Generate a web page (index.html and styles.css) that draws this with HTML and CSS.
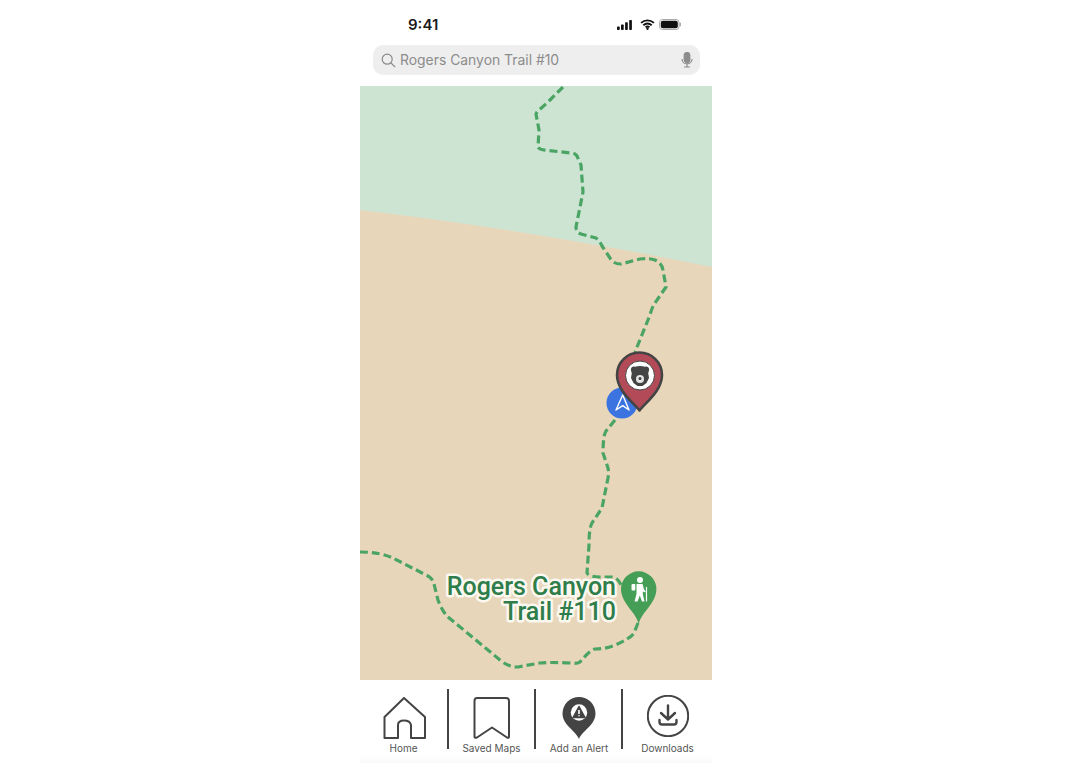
FILE: index.html
```html
<!DOCTYPE html>
<html lang="en">
<head>
  <meta charset="UTF-8">
  <title>Trail Map</title>
  <meta name="viewport" content="width=device-width, initial-scale=1.0">
  <link rel="stylesheet" href="styles.css">
</head>
<body>

<div class="phone">
  <div class="status-bar">
    <span class="time">9:41</span>
    <div class="status-icons">
      <svg width="15" height="10" viewBox="0 0 15 10"><rect x="0" y="6.500" width="2.700" height="3.500" rx="0.700"/><rect x="4" y="4.500" width="2.700" height="5.500" rx="0.700"/><rect x="8.100" y="2.200" width="2.700" height="7.800" rx="0.700"/><rect x="12.200" y="0" width="2.700" height="10" rx="0.700"/></svg>
      <svg class="wifi-icon" width="15" height="11" viewBox="0 0 16 12"><path class="wifi" d="M1 4.200C5 .6 11 .6 15 4.200M3.400 6.800c2.700-2.300 6.500-2.300 9.200 0M5.900 9c1.300-1 2.900-1 4.200 0"/><circle cx="8" cy="10.600" r="1.300"/></svg>
      <svg width="22" height="11" viewBox="0 0 22 11"><rect class="batt-edge" x="0.500" y="0.500" width="19.500" height="10" rx="3"/><rect x="1.800" y="1.800" width="17" height="7.400" rx="2"/><rect class="batt-edge-fill" x="20.600" y="3.600" width="1.200" height="3.800" rx="0.600"/></svg>
    </div>
  </div>

  <div class="search">
    <svg class="search-icon" width="15" height="15" viewBox="0 0 15 15"><circle cx="6.200" cy="6.200" r="5"/><path d="M10 10l4.200 4.200"/></svg>
    <span class="search-text">Rogers Canyon Trail #10</span>
    <svg class="mic" width="12" height="16" viewBox="0 0 12 16"><rect class="mic-head" x="3.200" y="0.500" width="5.600" height="10" rx="2.800"/><path d="M1 7c0 6.400 10 6.400 10 0M6 12v2.500M3 15h6"/></svg>
  </div>

  <svg class="map" width="352" height="594" viewBox="360 86 352 594">
    <rect class="land" x="360" y="86" width="352" height="594"/>
    <path class="forest" d="M360 86H712V267Q530 230 360 210Z"/>

    <path class="trail" d="M563 87L549 101L537 112L536 114L539 130L538 147Q539 149 544 150L571 153Q575 153 577 156L581 165L583 192L579 212L576 227Q576 232 581 234L596 238Q599 240 602 246L610 258Q613 264 621 264L640 259Q650 258 655 260Q662 263 663 270L666 287L655 303Q652 307 650 315L635 352"/>
    <path class="trail" d="M615 420L606 431Q603 436 603 453L608 468Q609 472 608 478L602 508L592 523Q589 528 589 545L587 573Q590 577 600 577L612 577Q618 577 622 587"/>
    <path class="trail" d="M638 623L634 633Q630 639 613 646Q605 649 595 649Q590 650 580 662Q577 664 570 663Q550 662 540 663L518 667Q508 667 500 660L448 617Q442 611 438 600L434 584Q433 578 426 575L393 558Q380 552 360 552"/>

    <text class="trail-label" x="616" y="595">Rogers Canyon</text>
    <text class="trail-label" x="616" y="620">Trail #110</text>

    <!-- green hiker pin -->
    <path class="pin-green" d="M638.700 625C637.500 613 621 604 621 589A17.700 17.700 0 0 1 656.400 589C656.400 604 640 613 638.700 625Z"/>
    <circle class="hiker" cx="640" cy="580" r="3"/>
    <path class="hiker" d="M636.500 584H642.500L644 589.500L645.500 591V592.500L642.800 591.500V594L644.500 601.500H642L639.800 595.500L637.500 601.500H634.500L636.500 594Z"/>
    <rect class="hiker" x="631.500" y="584" width="3.800" height="6.500" rx="1"/>
    <path class="hiker-pole" d="M646.500 587V601.500"/>

    <!-- position marker -->
    <circle class="you" cx="622" cy="403" r="15.500"/>
    <path class="you-arrow" d="M622.700 395L629 410L622.700 405.700L616 410Z"/>

    <!-- bear alert pin -->
    <path class="pin-red" d="M639.500 410.500C634 403 617 391 617 375A22.500 22.500 0 0 1 662 375C662 391 645 403 639.500 410.500Z"/>
    <circle class="bear-ring" cx="640" cy="375.500" r="14.500"/>
    <path class="bear" d="M631 370.500A3 3 0 0 1 635 366.800Q640 365.200 645 366.800A3 3 0 0 1 649 370.500Q648.500 372 648.200 373L649 378L646.500 383L642.500 386H637.500L633.500 383L631 378L631.800 373Q631.300 372 631 370.500Z"/>
    <circle class="bear-snout" cx="640" cy="379" r="4"/>
    <circle class="bear" cx="640" cy="378.500" r="1.500"/>
  </svg>

  <nav class="tabbar">
    <a class="tab tab-home">
      <svg class="tab-icon" width="44" height="42" viewBox="0 0 44 42"><path d="M22 1L2.500 20V41H16V28Q16 23.500 22 23.500T29 28V41H43V20L22 1Z"/></svg>
      <span>Home</span>
    </a>
    <div class="divider"></div>
    <a class="tab">
      <svg class="tab-icon" width="38" height="42" viewBox="0 0 38 42"><path d="M4 1H33Q36 1 36 4V39.500Q36 41.500 34 40.500L19 30.500L4 40.500Q1.500 41.500 1.500 39.500V4Q1.500 1 4 1Z"/></svg>
      <span>Saved Maps</span>
    </a>
    <div class="divider"></div>
    <a class="tab tab-alert">
      <svg class="tab-icon" width="34" height="42" viewBox="0 0 34 42"><path class="alert-pin" d="M17 42C13 33 .5 28 .5 16.500A16.500 16.500 0 0 1 33.500 16.500C33.500 28 21 33 17 42Z"/><circle class="alert-hole" cx="17" cy="15.500" r="8.200"/><path class="alert-tri" d="M17 9.500L23 20.500H11Z"/><path class="alert-mark" d="M17 13V17M17 18.300V19.300"/></svg>
      <span>Add an Alert</span>
    </a>
    <div class="divider"></div>
    <a class="tab tab-downloads">
      <svg class="tab-icon" width="42" height="42" viewBox="0 0 42 42"><circle cx="21" cy="21" r="20.200"/><path class="dl" d="M21 10.500V24.500M14 18L21 24.500L28 18M12.500 25V27Q12.500 29.500 15 29.500H27Q29.500 29.500 29.500 27V25"/></svg>
      <span>Downloads</span>
    </a>
  </nav>
</div>

</body>
</html>
```

FILE: styles.css
```css
body {
  margin: 0;
  background: white;
  font-family: Inter, "Liberation Sans", sans-serif;
}

.phone {
  width: 352px;
  height: 763px;
  margin: 0 auto;
  overflow: hidden;
}

.status-bar {
  height: 45px;
  display: flex;
  justify-content: space-between;
  align-items: center;
  padding: 4px 31px 0 48px;
  box-sizing: border-box;
}

.time {
  font-size: 15px;
  font-weight: 600;
  color: #1a1a1a;
}

.status-icons {
  display: flex;
  align-items: center;
  gap: 4px;
}

.status-icons svg {
  fill: #111;
}

.status-icons .wifi-icon {
  margin-left: 4px;
}

.wifi {
  fill: none;
  stroke: #111;
  stroke-width: 2;
}

.batt-edge {
  fill: none;
  stroke: #aaa;
}

.batt-edge-fill {
  fill: #999;
}

.search {
  width: 327px;
  height: 30px;
  margin: 0 0 11px 13px;
  background: #eeeeee;
  border-radius: 10px;
  display: flex;
  align-items: center;
  padding: 0 7px 0 8px;
  box-sizing: border-box;
}

.search-icon {
  fill: none;
  stroke: #8a8a8a;
  stroke-width: 1.2;
  margin-right: 4px;
}

.search-text {
  flex: 1;
  font-size: 13.9px;
  color: #8c8c8c;
}

.mic {
  fill: none;
  stroke: #8c8c8c;
  stroke-width: 1.2;
}

.mic-head {
  fill: #8c8c8c;
}

.map {
  display: block;
}

.land {
  fill: #e8d6bb;
}

.forest {
  fill: #cde4d3;
}

.trail {
  fill: none;
  stroke: #4aa463;
  stroke-width: 3.2;
  stroke-dasharray: 8 4;
  stroke-linejoin: round;
}

.trail-label {
  font-family: Roboto, sans-serif;
  font-size: 25px;
  font-weight: 500;
  text-anchor: end;
  fill: #2e7d4a;
  stroke: #fbf8f0;
  stroke-width: 5px;
  stroke-linejoin: round;
  paint-order: stroke;
}

.pin-green {
  fill: #459e56;
}

.hiker {
  fill: white;
}

.hiker-pole {
  fill: none;
  stroke: white;
  stroke-width: 1.2;
}

.you {
  fill: #3b74e0;
}

.you-arrow {
  fill: none;
  stroke: white;
  stroke-width: 1.4;
  stroke-linejoin: round;
}

.pin-red {
  fill: #b24a57;
  stroke: #444;
  stroke-width: 2.6;
  stroke-linejoin: round;
}

.bear-ring {
  fill: white;
  stroke: #444;
  stroke-width: 1;
}

.bear {
  fill: #444;
}

.bear-snout {
  fill: #e4e4e4;
}

.tabbar {
  height: 83px;
  display: flex;
  background: linear-gradient(to bottom, white 90%, #fafafa);
}

.tab {
  width: 85px;
  display: flex;
  flex-direction: column;
  align-items: center;
  padding-top: 17px;
  font-size: 10px;
  color: #555;
  box-sizing: border-box;
}

.tab-home {
  width: 87px;
}

.tab-alert {
  padding-left: 1px;
}

.tab span {
  margin-top: 3px;
}

.tab-downloads {
  flex: 1;
  padding-top: 15px;
}

.tab-downloads span {
  margin-top: 4.5px;
}

.tab-icon {
  fill: none;
  stroke: #444;
  stroke-width: 2;
  stroke-linejoin: round;
}

.divider {
  width: 2px;
  height: 60px;
  margin-top: 9px;
  background: #444;
}

.alert-pin {
  fill: #444;
  stroke: none;
}

.alert-hole {
  fill: white;
  stroke: none;
}

.alert-tri {
  fill: #444;
  stroke: #444;
  stroke-width: 1.5;
}

.alert-mark {
  stroke: white;
  stroke-width: 1.6;
}

.dl {
  stroke-linecap: round;
  stroke-width: 2.4;
}
```
